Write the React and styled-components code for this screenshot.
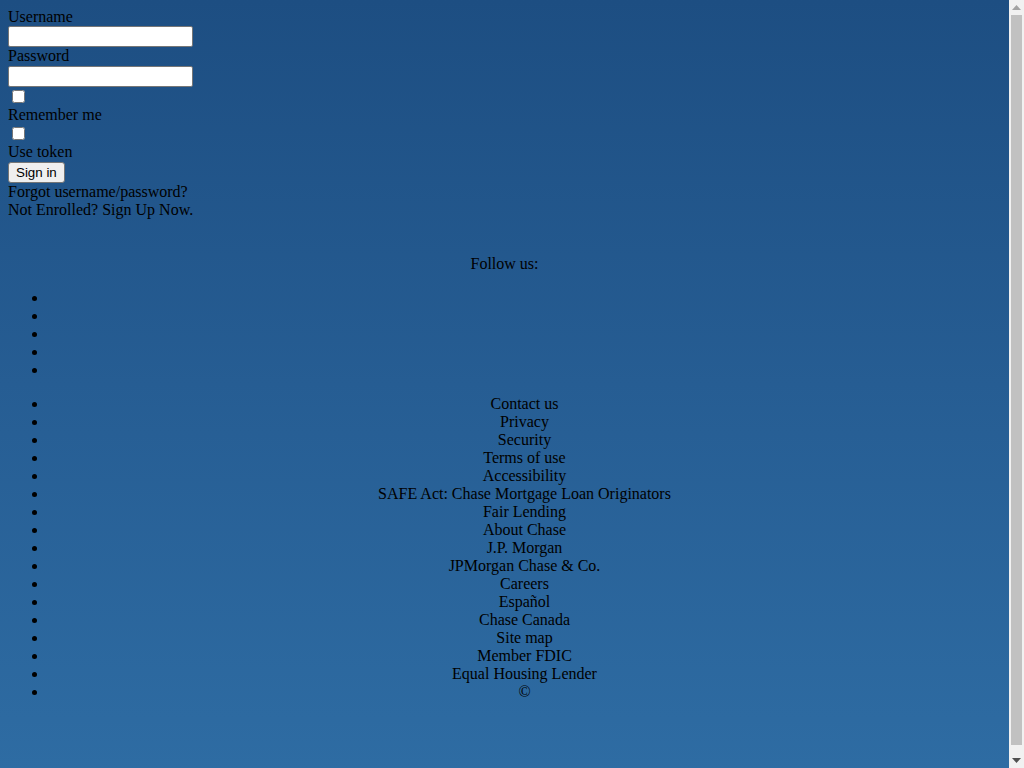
import React from 'react'
import styled, { createGlobalStyle } from 'styled-components'

const socialLinks = ['facebook', 'instagram', 'twitter', 'youtube', 'linkedin']

const footerLinks = [
  'Contact us',
  'Privacy',
  'Security',
  'Terms of use',
  'Accessibility',
  'SAFE Act: Chase Mortgage Loan Originators',
  'Fair Lending',
  'About Chase',
  'J.P. Morgan',
  'JPMorgan Chase & Co.',
  'Careers',
  'Español',
  'Chase Canada',
  'Site map',
  'Member FDIC',
  'Equal Housing Lender',
  '©',
]

export default function App() {
  return (
    <>
      <GlobalStyle />
      <Page>
        <LoginForm onSubmit={(e) => e.preventDefault()}>
          <FieldLabel htmlFor="username">Username</FieldLabel>
          <TextInput id="username" type="text" />
          <FieldLabel htmlFor="password">Password</FieldLabel>
          <TextInput id="password" type="password" />
          <Checkbox id="remember" type="checkbox" />
          <FieldLabel htmlFor="remember">Remember me</FieldLabel>
          <Checkbox id="token" type="checkbox" />
          <FieldLabel htmlFor="token">Use token</FieldLabel>
          <SignInButton type="submit">Sign in</SignInButton>
          <PlainLink>Forgot username/password?</PlainLink>
          <PlainLink>Not Enrolled? Sign Up Now.</PlainLink>
        </LoginForm>

        <Footer>
          <FollowTitle>Follow us:</FollowTitle>
          <LinkList>
            {socialLinks.map((name) => (
              <LinkItem key={name} aria-label={name} />
            ))}
          </LinkList>
          <LinkList>
            {footerLinks.map((text) => (
              <LinkItem key={text}>{text}</LinkItem>
            ))}
          </LinkList>
        </Footer>
      </Page>

      {/* window scrollbar, the page is a little taller than the viewport */}
      <Scrollbar aria-hidden="true">
        <ScrollArrow>
          <svg width="9" height="5" viewBox="0 0 9 5">
            <path d="M4.5 0 L9 5 L0 5 Z" fill="#a3a3a3" />
          </svg>
        </ScrollArrow>
        <ScrollTrack>
          <ScrollThumb />
        </ScrollTrack>
        <ScrollArrow>
          <svg width="9" height="5" viewBox="0 0 9 5">
            <path d="M0 0 L9 0 L4.5 5 Z" fill="#505050" />
          </svg>
        </ScrollArrow>
      </Scrollbar>
    </>
  )
}

const GlobalStyle = createGlobalStyle`
  html {
    background: linear-gradient(to bottom, #1d4e82 0%, #265d93 50%, #2e6ca3 100%);
    background-attachment: fixed;
    min-height: 100%;
  }
  body {
    margin: 8px 23px 8px 8px;
    font-family: "Liberation Serif", "Times New Roman", serif;
    font-size: 16px;
    color: #000;
  }
`

const Page = styled.div`
  min-height: 740px;
`

const LoginForm = styled.form`
  display: flex;
  flex-direction: column;
  align-items: flex-start;
  line-height: 18.4px;
`

const FieldLabel = styled.label`
  display: block;
  height: 18.4px;
`

const TextInput = styled.input`
  box-sizing: border-box;
  width: 185px;
  height: 21px;
  margin: 0;
  padding: 1px 2px;
  border: 1px solid #767676;
  border-radius: 2px;
  background: #fff;
  font-family: "Liberation Sans", Arial, sans-serif;
  font-size: 13px;
`

const Checkbox = styled.input`
  display: block;
  width: 13px;
  height: 13px;
  margin: 3px 3px 3px 4px;
`

const SignInButton = styled.button`
  box-sizing: border-box;
  height: 21px;
  margin: 0;
  padding: 0 7px;
  border: 1px solid #767676;
  border-radius: 3px;
  background: #efefef;
  color: #000;
  font-family: "Liberation Sans", Arial, sans-serif;
  font-size: 13.33px;
  line-height: 15px;
`

const PlainLink = styled.span`
  display: block;
  height: 18.4px;
`

const Footer = styled.footer`
  margin-top: 36px;
  text-align: center;
  line-height: 18px;
`

const FollowTitle = styled.div`
  height: 18px;
`

const LinkList = styled.ul`
  margin: 16px 0;
  padding-left: 40px;
`

const LinkItem = styled.li`
  height: 18px;
`

const Scrollbar = styled.div`
  position: fixed;
  top: 0;
  right: 0;
  bottom: 0;
  width: 15px;
  display: flex;
  flex-direction: column;
  background: #f1f1f1;
`

const ScrollArrow = styled.div`
  height: 15px;
  display: flex;
  align-items: center;
  justify-content: center;
  flex-shrink: 0;
`

const ScrollTrack = styled.div`
  flex: 1;
  display: flex;
  padding: 0 2px 8px;
`

const ScrollThumb = styled.div`
  flex: 1;
  background: #c1c1c1;
`
